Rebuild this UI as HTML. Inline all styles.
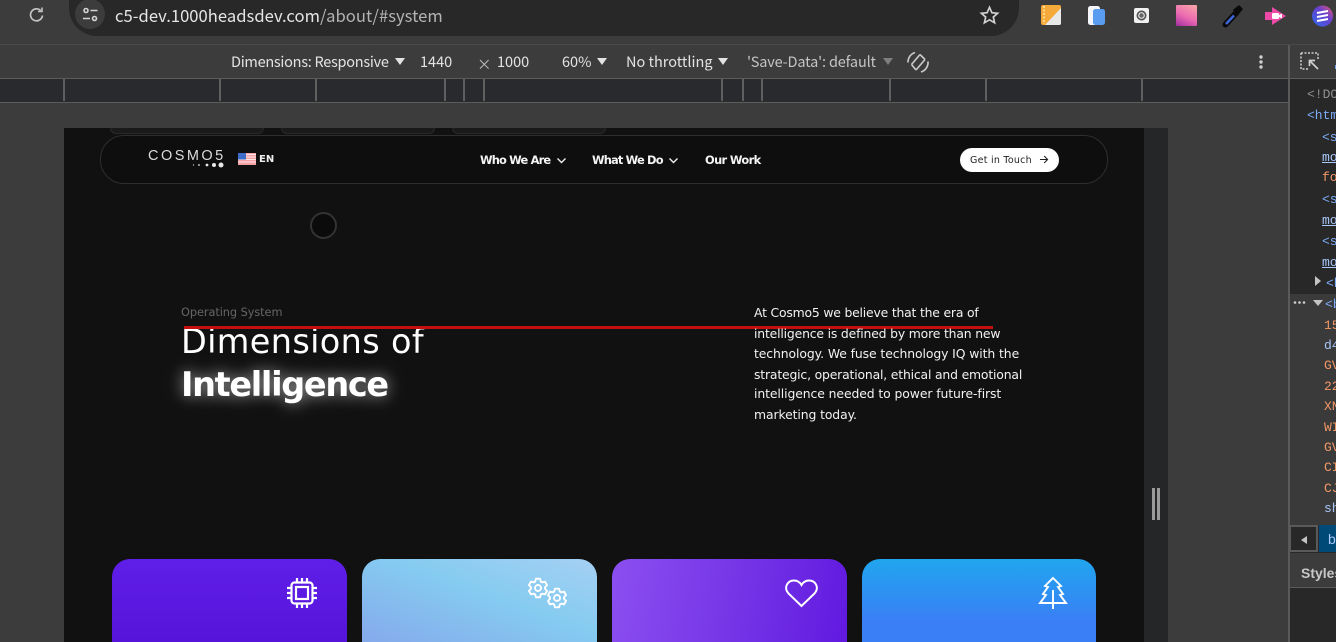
<!DOCTYPE html>
<html lang="en"><head><meta charset="utf-8"><title>Cosmo5</title>
<style>
html,body{margin:0;padding:0;width:1336px;height:642px;overflow:hidden;background:#3c3c3c}
body{position:relative;font-family:"Liberation Sans","Noto Sans CJK JP",sans-serif}
.a{position:absolute;white-space:nowrap}
.ui{font-family:"Noto Sans CJK JP","Liberation Sans",sans-serif;color:#e3e3e3;font-size:14.5px;line-height:20px}
.n{font-family:"DejaVu Sans",sans-serif}
.tick{position:absolute;top:79px;width:2px;height:22px;background:#5f5f5f}
.mono{position:absolute;font-family:"Liberation Mono",monospace;font-size:13px;line-height:16px;white-space:nowrap;margin-top:1px}
.card{position:absolute;top:559px;height:83px;border-radius:18px 18px 0 0;overflow:hidden}
.p{left:754px;color:#f2f2f2;font-size:12.4px;line-height:20px;letter-spacing:-.19px}
.tri{position:absolute;top:58px;width:0;height:0;border-top:7px solid #e3e3e3;border-left:5px solid transparent;border-right:5px solid transparent}
svg{position:absolute;overflow:visible}
</style></head><body>

<!-- browser top -->
<div class="a" style="left:0;top:0;width:1336px;height:44px;background:#3c3c3c;border-bottom:1px solid #4a4a4a"></div>
<div class="a" style="left:69px;top:-20px;width:950px;height:56px;background:#282828;border-radius:0 0 28px 28px"></div>
<svg style="left:27px;top:5px" width="20" height="20" viewBox="0 0 20 20" fill="none" stroke="#c4c4c4" stroke-width="1.7"><path d="M15.5 10.5a6 6 0 1 1-1.8-5"/><path d="M15 2.5v4h-4" stroke-width="1.6"/></svg>
<div class="a" style="left:75px;top:-1px;width:30px;height:30px;border-radius:50%;background:#3c3c3c"></div>
<svg style="left:82px;top:7px" width="17" height="16" viewBox="0 0 17 16" fill="none" stroke="#d4d4d4" stroke-width="1.6"><circle cx="4" cy="3.5" r="2"/><path d="M8.5 3.5h7M1 11.5h7"/><circle cx="12.5" cy="11.5" r="2"/></svg>
<div class="a ui" style="left:115px;top:4px;font-size:16.6px;line-height:22px;letter-spacing:.03px;color:#e6e6e6">c5-dev.1000headsdev.com<span style="color:#b4b4b4">/about/#system</span></div>
<svg style="left:979px;top:5px" width="21" height="21" viewBox="0 0 21 21" fill="none" stroke="#d0d0d0" stroke-width="1.7"><path d="M10.5 2.3l2.4 5.4 5.7.6-4.3 3.8 1.3 5.7-5.1-3-5.1 3 1.3-5.7L2.4 8.3l5.7-.6z"/></svg>

<!-- extensions -->
<svg style="left:1041px;top:5px" width="21" height="21" viewBox="0 0 21 21"><rect width="20" height="20" rx="2" fill="#f5a93a"/><path d="M4 20L20 3v15a2 2 0 0 1-2 2z" fill="#e8e8e8"/><path d="M3 1v18" stroke="#ffd88a" stroke-width="2" stroke-dasharray="2 1.5"/></svg>
<svg style="left:1088px;top:6px" width="18" height="20" viewBox="0 0 18 20"><rect x="0" y="0" width="12" height="19" rx="2.5" fill="#f4f6fa"/><rect x="5" y="3" width="12" height="16" rx="2.5" fill="#5a9cf0"/></svg>
<svg style="left:1134px;top:8px" width="16" height="16" viewBox="0 0 16 16"><rect width="15" height="15" rx="2" fill="#f1f1f1"/><circle cx="7.5" cy="7.5" r="5" fill="#555"/><circle cx="7.5" cy="7.5" r="3.4" fill="#ddd"/><circle cx="7.5" cy="7.5" r="2.2" fill="#666"/></svg>
<div class="a" style="left:1176px;top:5px;width:21px;height:21px;background:linear-gradient(25deg,#a02ea0,#ec6ab0 45%,#f8a8a8);border-radius:1px"></div>
<svg style="left:1222px;top:5px" width="21" height="22" viewBox="0 0 21 22" fill="none"><path d="M3.5 19.500L14 8" stroke="#0a0a0a" stroke-width="6" stroke-linecap="round"/><path d="M4 19L12 10.500" stroke="#3e66d8" stroke-width="2.500"/><path d="M12 5l5-4 3 3-4 5z" fill="#0a0a0a" stroke="#0a0a0a" stroke-width="1.500"/></svg>
<svg style="left:1265px;top:7px" width="22" height="18" viewBox="0 0 22 18"><path d="M0 5h7V0l14 9-14 9v-5H0z" fill="#ec4aa6"/><rect x="7" y="6" width="7" height="6" rx="1" fill="#fff"/><path d="M14 8l3-1.500v5L14 10z" fill="#fff"/></svg>
<svg style="left:1312px;top:5px" width="24" height="22" viewBox="0 0 24 22"><circle cx="10.500" cy="11" r="10.500" fill="url(#g)"/><defs><linearGradient id="g" x1="0" y1="1" x2="1" y2="0"><stop offset="0" stop-color="#2d6bea"/><stop offset=".6" stop-color="#6a3fd0"/><stop offset="1" stop-color="#ee5a6a"/></linearGradient></defs><path d="M5 8l11-2M5 12l11-2M5 16l11-2" stroke="#fff" stroke-width="2"/></svg>

<!-- device toolbar -->
<div class="a" style="left:0;top:45px;width:1289px;height:33px;background:#3c3c3c;border-bottom:1px solid #5c5c5c"></div>
<div class="a ui" style="left:231px;top:52px;letter-spacing:-.27px">Dimensions: Responsive</div>
<div class="tri" style="left:395px"></div>
<div class="a ui" style="left:420px;top:52px">1440</div>
<div class="a ui" style="left:477px;top:55px;color:#bcbcbc">×</div>
<div class="a ui" style="left:497px;top:52px">1000</div>
<div class="a ui" style="left:562px;top:52px">60%</div>
<div class="tri" style="left:597px"></div>
<div class="a ui" style="left:626px;top:52px">No throttling</div>
<div class="tri" style="left:718px"></div>
<div class="a ui" style="left:747px;top:52px;color:#c4c4c4;letter-spacing:-.15px">'Save-Data': default</div>
<div class="tri" style="left:883px;border-top-color:#7e7e7e"></div>
<svg style="left:906px;top:50px" width="24" height="24" viewBox="0 0 24 24" fill="none" stroke="#c8c8c8" stroke-width="1.700"><path d="M5.500 14.500L14 4.500M10 20L19 9.500M5.500 14.500L10 20M14 4.500L19 9.500" stroke-linejoin="round"/><path d="M2 12.500A10 10 0 0 1 9 2.500M22 11.500A10 10 0 0 1 15 22"/></svg>
<svg style="left:1258px;top:54px" width="6" height="16" viewBox="0 0 6 16" fill="#cfcfcf"><circle cx="3" cy="3" r="1.700"/><circle cx="3" cy="8" r="1.700"/><circle cx="3" cy="13" r="1.700"/></svg>

<!-- ruler -->
<div class="a" style="left:0;top:79px;width:1289px;height:23px;background:#292a2d;border-bottom:1px solid #5c5c5c"></div>
<div class="tick" style="left:63px"></div><div class="tick" style="left:219px"></div><div class="tick" style="left:315px"></div><div class="tick" style="left:444px"></div><div class="tick" style="left:463px"></div><div class="tick" style="left:483px"></div><div class="tick" style="left:721px"></div><div class="tick" style="left:742px"></div><div class="tick" style="left:761px"></div><div class="tick" style="left:889px"></div><div class="tick" style="left:985px"></div><div class="tick" style="left:1141px"></div>

<!-- page -->
<div class="a" style="left:64px;top:128px;width:1080px;height:514px;background:#111112;overflow:hidden"></div>
<div class="a" style="left:1144px;top:128px;width:24px;height:514px;background:#252628"></div>
<div class="a" style="left:1152px;top:488px;width:3px;height:32px;background:#9a9a9a"></div>
<div class="a" style="left:1157px;top:488px;width:3px;height:32px;background:#9a9a9a"></div>

<div class="a" style="left:110px;top:128px;width:152px;height:5px;background:#1a1a1b;border:1px solid #2a2a2a;border-top:0;border-radius:0 0 10px 10px"></div>
<div class="a" style="left:281px;top:128px;width:152px;height:5px;background:#1a1a1b;border:1px solid #2a2a2a;border-top:0;border-radius:0 0 10px 10px"></div>
<div class="a" style="left:452px;top:128px;width:152px;height:5px;background:#1a1a1b;border:1px solid #2a2a2a;border-top:0;border-radius:0 0 10px 10px"></div>

<div class="a" style="left:100px;top:135px;width:1006px;height:47px;border:1px solid #2e2e2e;border-radius:24px;background:#0e0e0f"></div>
<div class="a" style="left:148px;top:147px;color:#dcdcdc;font-size:14.500px;line-height:18px;letter-spacing:2.470px">COSMO5</div>
<svg style="left:192px;top:162px" width="32" height="6" viewBox="0 0 32 6" fill="#e8e8e8"><circle cx="1.500" cy="3" r=".6"/><circle cx="7" cy="3" r=".9"/><circle cx="15" cy="3" r="1.400"/><circle cx="22" cy="3" r="2"/><circle cx="29" cy="3" r="2.500"/></svg>
<svg style="left:238px;top:153px" width="18" height="12" viewBox="0 0 18 12"><rect width="18" height="12" fill="#f4a0a5"/><path d="M0 1.500h18M0 4h18M0 6.500h18M0 9h18" stroke="#fbe6e6" stroke-width="1"/><rect width="8" height="6.500" fill="#3f6cc8"/></svg>
<div class="a n" style="left:259px;top:153px;color:#eee;font-size:10px;line-height:14px;font-weight:700">EN</div>

<div class="a n" style="left:480px;top:153px;color:#f4f4f4;font-size:11.400px;line-height:15px;font-weight:700;letter-spacing:-.82px">Who We Are</div>
<svg style="left:556px;top:157px" width="11" height="7" viewBox="0 0 11 7" fill="none" stroke="#eee" stroke-width="1.400"><path d="M1.500 1.500l4 4 4-4"/></svg>
<div class="a n" style="left:592px;top:153px;color:#f4f4f4;font-size:11.400px;line-height:15px;font-weight:700;letter-spacing:-.82px">What We Do</div>
<svg style="left:668px;top:157px" width="11" height="7" viewBox="0 0 11 7" fill="none" stroke="#eee" stroke-width="1.400"><path d="M1.500 1.500l4 4 4-4"/></svg>
<div class="a n" style="left:705px;top:153px;color:#f4f4f4;font-size:11.400px;line-height:15px;font-weight:700;letter-spacing:-.62px">Our Work</div>
<div class="a" style="left:960px;top:148px;width:99px;height:24px;background:#fff;border-radius:12px"></div>
<div class="a n" style="left:970px;top:154px;color:#222;font-size:9.500px;line-height:13px;letter-spacing:.25px">Get in Touch</div>
<svg style="left:1039px;top:155px" width="10" height="9" viewBox="0 0 10 9" fill="none" stroke="#222" stroke-width="1.100"><path d="M1 4.500h7.500M5.200 1l3.400 3.500L5.200 8"/></svg>

<div class="a" style="left:310px;top:212px;width:23px;height:23px;border:2px solid #333;border-radius:50%;background:#0b0b0c"></div>

<div class="a n" style="left:181px;top:305px;color:#666;font-size:11.300px;line-height:16px;letter-spacing:-.05px">Operating System</div>
<div class="a n" style="left:181px;top:320px;color:#fff;font-size:33.500px;line-height:44px;letter-spacing:.35px">Dimensions of</div>
<div class="a n" style="left:181px;top:363px;color:#fff;font-size:33.500px;line-height:44px;font-weight:700;letter-spacing:-1.320px;text-shadow:0 0 14px rgba(255,255,255,.5),0 0 26px rgba(255,255,255,.25)">Intelligence</div>
<div class="a" style="left:184px;top:326px;width:809px;height:3px;background:#c30f0f"></div>

<div class="a n p" style="top:303px">At Cosmo5 we believe that the era of</div>
<div class="a n p" style="top:324px;letter-spacing:-.17px">intelligence is defined by more than new</div>
<div class="a n p" style="top:344px;letter-spacing:-.09px">technology. We fuse technology IQ with the</div>
<div class="a n p" style="top:365px;letter-spacing:-.17px">strategic, operational, ethical and emotional</div>
<div class="a n p" style="top:384px;letter-spacing:-.09px">intelligence needed to power future-first</div>
<div class="a n p" style="top:405px;letter-spacing:-.1px">marketing today.</div>

<!-- cards -->
<div class="card" style="left:112px;width:235px;background:linear-gradient(180deg,#5f1fe8,#5613da)"></div>
<div class="card" style="left:362px;width:235px;background:linear-gradient(200deg,#a5d0f4 0%,#85cbf0 45%,#85aaec 100%)"></div>
<div class="card" style="left:612px;width:235px;background:linear-gradient(100deg,#8b4ff0,#7434e6 55%,#6119e0)"></div>
<div class="card" style="left:862px;width:234px;background:linear-gradient(180deg,#20a6ee,#3a7ff6 75%)"></div>

<svg style="left:286px;top:577px" width="32" height="32" viewBox="0 0 32 32" fill="none" stroke="#fff" stroke-width="2.200"><rect x="5.500" y="5.500" width="21" height="21" rx="3"/><rect x="10" y="10" width="12" height="12"/><path d="M11 1v4M16 1v4M21 1v4M11 27v4M16 27v4M21 27v4M1 11h4M1 16h4M1 21h4M27 11h4M27 16h4M27 21h4"/></svg>
<svg style="left:538px;top:588px" width="1" height="1" fill="none" stroke="#fff" stroke-width="1.900" stroke-linejoin="round"><path d="M-1.980-9.290L1.980-9.290 2.960-6.340 4.020-5.730 7.060-6.360 9.040-2.940 6.970-.61 6.970.61 9.040 2.940 7.060 6.360 4.020 5.730 2.960 6.340 1.980 9.290-1.980 9.290-2.960 6.340-4.020 5.730-7.060 6.360-9.040 2.940-6.970.61-6.970-.61-9.040-2.940-7.060-6.360-4.020-5.730-2.960-6.340Z"/><circle r="3"/></svg>
<svg style="left:557px;top:598px" width="1" height="1" fill="none" stroke="#fff" stroke-width="1.900" stroke-linejoin="round"><path d="M-1.980-9.290L1.980-9.290 2.960-6.340 4.020-5.730 7.060-6.360 9.040-2.940 6.970-.61 6.970.61 9.040 2.940 7.060 6.360 4.020 5.730 2.960 6.340 1.980 9.290-1.980 9.290-2.960 6.340-4.020 5.730-7.060 6.360-9.040 2.940-6.970.61-6.970-.61-9.040-2.940-7.060-6.360-4.020-5.730-2.960-6.340Z"/><circle r="3"/></svg>
<svg style="left:785px;top:579px" width="33" height="29" viewBox="0 0 33 29" fill="none" stroke="#fff" stroke-width="2"><path d="M16.500 27L3.500 14.500C-2 8 3 1.500 9 1.500c3.500 0 6 2 7.500 4.500C18 3.500 20.500 1.500 24 1.500c6 0 11 6.500 5.500 13z"/></svg>
<svg style="left:1039px;top:577px" width="28" height="32" viewBox="0 0 28 32" fill="none" stroke="#fff" stroke-width="1.900"><path d="M14 1L22 9 19 10 24 17 21 18 27 26H1L7 18 4 17 9 10 6 9Z"/><path d="M14 13V32"/></svg>

<!-- devtools right -->
<div class="a" style="left:1288px;top:45px;width:2px;height:597px;background:#5a5a5a"></div>
<div class="a" style="left:1290px;top:45px;width:46px;height:33px;background:#3c3c3c;border-bottom:1px solid #5c5c5c"></div>
<div class="a" style="left:1290px;top:79px;width:46px;height:446px;background:#282828"></div>
<svg style="left:1300px;top:52px" width="20" height="19" viewBox="0 0 20 19" fill="none" stroke="#cfcfcf" stroke-width="1.500"><path d="M1 1h17v7M1 1v16h7" stroke-dasharray="2 1.500"/><path d="M18 17L9.500 8.500M9.500 14V8.500H15" stroke-width="1.700"/></svg>
<div class="a" style="left:1335px;top:65px;width:1px;height:4px;background:#6f9ee8"></div>
<div class="a" style="left:1290px;top:294px;width:46px;height:231px;background:#3a3a3a"></div>

<div class="mono" style="left:1307px;top:86px;color:#8f8f8f">&lt;!DO</div>
<div class="mono" style="left:1307px;top:107px;color:#7cacf8">&lt;htm</div>
<div class="mono" style="left:1322px;top:129px;color:#7cacf8">&lt;s</div>
<div class="mono" style="left:1322px;top:149px;color:#a8c7fa;text-decoration:underline">mo</div>
<div class="mono" style="left:1322px;top:169px;color:#f29766">fo</div>
<div class="mono" style="left:1322px;top:191px;color:#7cacf8">&lt;s</div>
<div class="mono" style="left:1322px;top:212px;color:#a8c7fa;text-decoration:underline">mo</div>
<div class="mono" style="left:1322px;top:233px;color:#7cacf8">&lt;s</div>
<div class="mono" style="left:1322px;top:254px;color:#a8c7fa;text-decoration:underline">mo</div>
<div class="a" style="left:1315px;top:276px;width:0;height:0;border-left:6px solid #c4c4c4;border-top:5px solid transparent;border-bottom:5px solid transparent"></div>
<div class="mono" style="left:1326px;top:275px;color:#7cacf8">&lt;h</div>
<svg style="left:1293px;top:300px" width="14" height="5" viewBox="0 0 14 5" fill="#cfcfcf"><circle cx="2" cy="2.500" r="1.300"/><circle cx="6.500" cy="2.500" r="1.300"/><circle cx="11" cy="2.500" r="1.300"/></svg>
<div class="a" style="left:1313px;top:300px;width:0;height:0;border-top:6px solid #c4c4c4;border-left:5px solid transparent;border-right:5px solid transparent"></div>
<div class="mono" style="left:1325px;top:296px;color:#7cacf8">&lt;b</div>
<div class="mono" style="left:1324px;top:317px;color:#f29766">15</div>
<div class="mono" style="left:1324px;top:337px;color:#a8c7fa">d4</div>
<div class="mono" style="left:1324px;top:357px;color:#f29766">GV</div>
<div class="mono" style="left:1324px;top:378px;color:#f29766">22</div>
<div class="mono" style="left:1324px;top:398px;color:#f29766">XN</div>
<div class="mono" style="left:1324px;top:419px;color:#f29766">WI</div>
<div class="mono" style="left:1324px;top:439px;color:#f29766">GV</div>
<div class="mono" style="left:1324px;top:459px;color:#f29766">CI</div>
<div class="mono" style="left:1324px;top:480px;color:#f29766">CJ</div>
<div class="mono" style="left:1324px;top:500px;color:#a8c7fa">sh</div>

<div class="a" style="left:1290px;top:525px;width:46px;height:103px;background:#282828"></div>
<div class="a" style="left:1289px;top:525px;width:29px;height:27px;box-sizing:border-box;background:#282828;border:2px solid #5a5a5a"></div>
<div class="a" style="left:1301px;top:536px;width:0;height:0;border-right:6px solid #c4c4c4;border-top:4px solid transparent;border-bottom:4px solid transparent"></div>
<div class="a" style="left:1319px;top:525px;width:17px;height:27px;background:#004a77"></div>
<div class="a" style="left:1328px;top:529px;color:#a8c7fa;font-size:14px;line-height:20px">b</div>
<div class="a" style="left:1290px;top:553px;width:46px;height:34px;background:#3c3c3c;border-bottom:1px solid #5c5c5c"></div>
<div class="a" style="left:1301px;top:563px;color:#cfcfcf;font-size:14px;line-height:20px;font-weight:700;opacity:.95">Styles</div>
<div class="a" style="left:1290px;top:588px;width:46px;height:54px;background:#282828"></div>
</body></html>
